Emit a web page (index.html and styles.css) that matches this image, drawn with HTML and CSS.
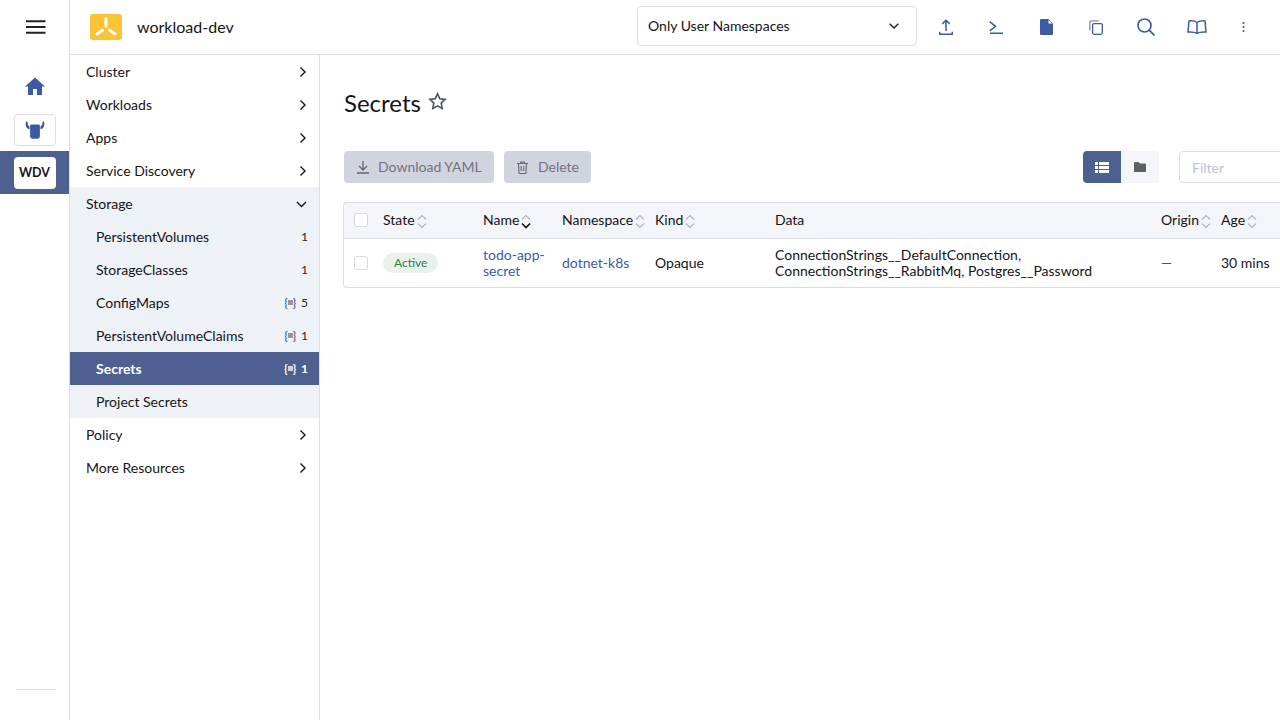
FILE: index.html
```html
<!DOCTYPE html>
<html lang="en">
<head>
<meta charset="utf-8">
<title>Secrets</title>
<link rel="stylesheet" href="styles.css">
</head>
<body>
<div class="app">
  <aside class="rail">
    <div class="rail-top">
      <svg class="burger" width="20" height="14" viewBox="0 0 20 14"><path d="M0 1.200h19.500M0 7h19.500M0 12.800h19.500" stroke="#222" stroke-width="2" fill="none"/></svg>
    </div>
    <div class="rail-home">
      <svg width="20" height="18" viewBox="0 0 20 18"><path fill="#3d5aa5" d="M10 .5 0 9.500h3V18h5v-6h4v6h5V9.500h3z"/></svg>
    </div>
    <div class="rail-box-wrap">
      <div class="rail-box">
        <svg width="20" height="18" viewBox="0 0 20 18"><path fill="#3d5aa5" d="M6.500 3.500h7c.8 0 1.400.4 1.400 1.200v10.300c0 1.700-1 2.700-2.400 2.700h-5c-1.400 0-2.400-1-2.400-2.700V4.700c0-.8.600-1.200 1.400-1.200zM1 .5C0 4 1 7.800 4.500 8.200V5C3 5 2.500 3.200 2.500.5zM19 .5c1 3.500 0 7.300-3.500 7.700V5c1.500 0 2-1.800 2-4.500z"/></svg>
      </div>
    </div>
    <div class="rail-active">
      <div class="rail-chip">WDV</div>
    </div>
    <div class="rail-spacer"></div>
    <div class="rail-rule"></div>
  </aside>

  <div class="shell">
    <header class="topbar">
      <div class="cluster">
        <svg class="logo" width="32" height="26" viewBox="0 0 32 26"><rect width="32" height="26" rx="3" fill="#f9c536"/><path d="M16 4.500V12M12.500 16.300 7 20M19.500 16.300 25 20" stroke="#fff" stroke-width="3" stroke-linecap="round" fill="none"/></svg>
        <span class="cluster-name">workload-dev</span>
      </div>
      <div class="ns-select">
        <span class="ns-label">Only User Namespaces</span>
        <svg width="10" height="6" viewBox="0 0 10 6"><path d="M.7.7 5 5l4.300-4.300" stroke="#222" stroke-width="1.400" fill="none"/></svg>
      </div>
      <div class="tools">
        <span class="tool"><svg width="14" height="16" viewBox="0 0 14 16"><path d="M7 12V1.200M3.300 4.900 7 1.200l3.700 3.700M.7 12.800v2.400h12.600v-2.400" stroke="#3d5aa5" stroke-width="1.500" fill="none"/></svg></span>
        <span class="tool"><svg width="14" height="13" viewBox="0 0 14 13"><path d="M.8.6 6.500 5.300.8 9.800M1 12.200h13" stroke="#3d5aa5" stroke-width="1.500" fill="none"/></svg></span>
        <span class="tool"><svg width="13" height="16" viewBox="0 0 13 16"><path fill="#3d5aa5" d="M1 0h7.500L13 4.500V15a1 1 0 0 1-1 1H1a1 1 0 0 1-1-1V1a1 1 0 0 1 1-1z"/><path fill="#fff" d="M8.500 .7 12.300 4.500H8.500z"/></svg></span>
        <span class="tool"><svg width="14" height="15" viewBox="0 0 14 15"><rect x="3.600" y="3.600" width="9.700" height="10.700" rx="1.500" fill="none" stroke="#3d5aa5" stroke-width="1.300"/><path d="M.8 10.500V2.300C.8 1.300 1.300.8 2.300.8h7.500" fill="none" stroke="#7f90c0" stroke-width="1.300"/></svg></span>
        <span class="tool"><svg width="18" height="18" viewBox="0 0 18 18"><circle cx="7.500" cy="7.500" r="6.500" fill="none" stroke="#3d5aa5" stroke-width="1.700"/><path d="m12.200 12.200 5.300 5.300" stroke="#3d5aa5" stroke-width="1.700"/></svg></span>
        <span class="tool tool-book"><svg width="20" height="14" viewBox="0 0 20 14"><path d="M10 2.500C8.500 1.200 5.500.7 2 .9L1 12c3.500-.2 7 .1 9 1.500 2-1.400 5.500-1.700 9-1.500L18 .9c-3.500-.2-6.500.3-8 1.600zM10 2.500v11" fill="none" stroke="#3d5aa5" stroke-width="1.500"/></svg></span>
        <span class="tool tool-more"><svg width="3" height="10" viewBox="0 0 3 10"><path d="M1.500 0v2M1.500 4v2M1.500 8v2" stroke="#4f68ad" stroke-width="1.800"/></svg></span>
      </div>
    </header>

    <div class="body">
      <nav class="side">
        <a class="nav-item"><span>Cluster</span><svg class="chev" width="7" height="12" viewBox="0 0 7 12"><path d="m1.500 1.500 4.500 4.500-4.500 4.500"/></svg></a>
        <a class="nav-item"><span>Workloads</span><svg class="chev" width="7" height="12" viewBox="0 0 7 12"><path d="m1.500 1.500 4.500 4.500-4.500 4.500"/></svg></a>
        <a class="nav-item"><span>Apps</span><svg class="chev" width="7" height="12" viewBox="0 0 7 12"><path d="m1.500 1.500 4.500 4.500-4.500 4.500"/></svg></a>
        <a class="nav-item"><span>Service Discovery</span><svg class="chev" width="7" height="12" viewBox="0 0 7 12"><path d="m1.500 1.500 4.500 4.500-4.500 4.500"/></svg></a>
        <div class="nav-group">
          <a class="nav-item"><span>Storage</span><svg class="chev chev-down" width="11" height="7" viewBox="0 0 11 7"><path d="m1 1 4.500 4.500L10 1"/></svg></a>
          <a class="nav-sub"><span>PersistentVolumes</span><span class="count">1</span></a>
          <a class="nav-sub"><span>StorageClasses</span><span class="count">1</span></a>
          <a class="nav-sub"><span>ConfigMaps</span><span class="count"><span class="ns-mark">{<i></i>}</span>5</span></a>
          <a class="nav-sub"><span>PersistentVolumeClaims</span><span class="count"><span class="ns-mark">{<i></i>}</span>1</span></a>
          <a class="nav-sub active"><span>Secrets</span><span class="count"><span class="ns-mark">{<i></i>}</span>1</span></a>
          <a class="nav-sub"><span>Project Secrets</span></a>
        </div>
        <a class="nav-item"><span>Policy</span><svg class="chev" width="7" height="12" viewBox="0 0 7 12"><path d="m1.500 1.500 4.500 4.500-4.500 4.500"/></svg></a>
        <a class="nav-item"><span>More Resources</span><svg class="chev" width="7" height="12" viewBox="0 0 7 12"><path d="m1.500 1.500 4.500 4.500-4.500 4.500"/></svg></a>
      </nav>

      <main class="main">
        <div class="title-row">
          <h1>Secrets</h1>
          <svg class="star" width="19" height="18" viewBox="0 0 19 18"><path d="m9.500 1.800 2.300 4.900 5.300.7-3.900 3.700 1 5.300-4.700-2.600-4.700 2.600 1-5.300L1.900 7.400l5.300-.7z" fill="none" stroke="#4d5160" stroke-width="1.600"/></svg>
        </div>
        <div class="actions">
          <button class="btn btn-dl"><svg width="12" height="13" viewBox="0 0 12 13"><path d="M6 0v8.500M2 5l4 4 4-4M0 12h12" fill="none" stroke="#63666f" stroke-width="1.300"/></svg><span class="btn-label">Download YAML</span></button>
          <button class="btn btn-del"><svg width="11" height="13" viewBox="0 0 11 13"><path d="M0 2.500h11M3.500 2.500V1h4v1.500M1.500 2.500l.5 9.500c0 .4.300.5.500.5h6c.2 0 .5-.1.500-.5l.5-9.500M4.200 5v5M6.800 5v5" fill="none" stroke="#63666f" stroke-width="1.100"/></svg><span class="btn-label">Delete</span></button>
          <div class="actions-fill"></div>
          <div class="toggle">
            <span class="toggle-on"><svg width="14" height="11" viewBox="0 0 14 11"><path fill="#fff" d="M0 0h3v3H0zM4 0h10v3H4zM0 4h3v3H0zM4 4h10v3H4zM0 8h3v3H0zM4 8h10v3H4z"/></svg></span>
            <span class="toggle-off"><svg width="12" height="10" viewBox="0 0 12 10"><path fill="#5e6066" d="M0 1c0-.6.400-1 1-1h3.500L6 1.500h5c.6 0 1 .4 1 1V9c0 .6-.4 1-1 1H1c-.6 0-1-.4-1-1z"/></svg></span>
          </div>
          <div class="filter">Filter</div>
        </div>

        <table class="grid">
          <colgroup>
            <col class="c-check"><col class="c-state"><col class="c-name"><col class="c-ns"><col class="c-kind"><col class="c-data"><col class="c-origin"><col class="c-age">
          </colgroup>
          <thead>
            <tr>
              <th class="check-cell"><span class="box"></span></th>
              <th>State<svg class="sort" width="10" height="15" viewBox="0 0 10 15"><path d="m1 5.500 4-4 4 4M1 9.500l4 4 4-4"/></svg></th>
              <th>Name<svg class="sort sort-on" width="10" height="15" viewBox="0 0 10 15"><path d="m1 5.500 4-4 4 4"/><path class="down" d="m1 9.500 4 4 4-4"/></svg></th>
              <th>Namespace<svg class="sort" width="10" height="15" viewBox="0 0 10 15"><path d="m1 5.500 4-4 4 4M1 9.500l4 4 4-4"/></svg></th>
              <th>Kind<svg class="sort" width="10" height="15" viewBox="0 0 10 15"><path d="m1 5.500 4-4 4 4M1 9.500l4 4 4-4"/></svg></th>
              <th>Data</th>
              <th>Origin<svg class="sort" width="10" height="15" viewBox="0 0 10 15"><path d="m1 5.500 4-4 4 4M1 9.500l4 4 4-4"/></svg></th>
              <th>Age<svg class="sort" width="10" height="15" viewBox="0 0 10 15"><path d="m1 5.500 4-4 4 4M1 9.500l4 4 4-4"/></svg></th>
            </tr>
          </thead>
          <tbody>
            <tr>
              <td class="check-cell"><span class="box"></span></td>
              <td><span class="badge">Active</span></td>
              <td class="name-cell"><a class="link">todo-app-secret</a></td>
              <td><a class="link">dotnet-k8s</a></td>
              <td>Opaque</td>
              <td>ConnectionStrings__DefaultConnection, ConnectionStrings__RabbitMq, Postgres__Password</td>
              <td class="muted">—</td>
              <td>30 mins</td>
            </tr>
          </tbody>
        </table>
      </main>
    </div>
  </div>
</div>
</body>
</html>
```
FILE: styles.css
```css
* { box-sizing: border-box; }
html, body { margin: 0; height: 100%; overflow: hidden; }
body { font-family: Lato, "Liberation Sans", sans-serif; font-size: 14px; color: #141419; background: #fff; }
.app { display: flex; width: 1280px; height: 720px; overflow: hidden; }

.rail { width: 70px; flex: none; display: flex; flex-direction: column; border-right: 1px solid #dcdee7; }
.rail-top { height: 55px; display: flex; align-items: center; justify-content: center; padding-left: 2px; padding-bottom: 1px; }
.rail-home { height: 59px; display: flex; align-items: center; justify-content: center; padding-top: 3px; padding-bottom: 1px; padding-left: 1px; }
.rail-box-wrap { height: 37px; display: flex; justify-content: center; }
.rail-box { width: 42px; height: 32px; border: 1px solid #dcdee7; border-radius: 4px; display: flex; align-items: center; justify-content: center; }
.rail-active { height: 43px; background: #4e6090; display: flex; align-items: center; justify-content: center; }
.rail-chip { width: 42px; height: 32px; background: #fff; border-radius: 4px; display: flex; align-items: center; justify-content: center; font-weight: 700; font-size: 12.500px; color: #141419; }
.rail-spacer { flex: 1; }
.rail-rule { height: 1px; margin: 0 13px 30px 16px; background: #dcdee7; }

.shell { flex: 1; min-width: 0; display: flex; flex-direction: column; }
.topbar { height: 55px; flex: none; display: flex; align-items: center; border-bottom: 1px solid #dcdee7; }
.cluster { flex: 1; display: flex; align-items: center; padding-left: 20px; }
.logo { margin-right: 15px; }
.cluster-name { font-size: 16px; position: relative; top: -1px; }
.ns-select { width: 280px; height: 40px; margin-top: -2px; border: 1px solid #dcdee7; border-radius: 4px; display: flex; align-items: center; justify-content: space-between; padding: 0 17px 0 10px; }
.ns-label { position: relative; top: -1px; }
.tools { display: flex; align-items: center; padding-left: 4px; padding-right: 13px; }
.tool { width: 50px; height: 32px; display: flex; align-items: center; justify-content: center; }
.tool-book { padding-left: 1px; }
.tool-more { width: 44px; margin-right: 2px; }

.body { flex: 1; display: flex; min-height: 0; }
.side { width: 250px; flex: none; border-right: 1px solid #dcdee7; }
.nav-item, .nav-sub { height: 33px; display: flex; align-items: center; justify-content: space-between; }
.nav-item { padding: 0 13px 0 16px; }
.nav-sub { padding: 0 11px 0 26px; }
.chev { fill: none; stroke: #141419; stroke-width: 1.400; margin-top: 1px; }
.chev-down { margin-right: -1px; }
.nav-group { background: #eef1f6; }
.nav-sub.active { background: #4e6090; color: #fff; font-weight: 700; }
.count { font-size: 12px; display: flex; align-items: center; }
.nav-sub .count { color: #26272c; }
.nav-sub.active .count { color: #fff; }
.ns-mark { font-size: 11px; display: flex; align-items: center; margin-right: 5px; color: #3b2a5a; }
.nav-sub.active .ns-mark { color: #fff; }
.ns-mark i { width: 5px; height: 5px; background: #93969f; margin: 0; }
.nav-sub.active .ns-mark i { background: #cfd3e0; }

.main { flex: 1; min-width: 0; padding-left: 24px; overflow: hidden; }
.title-row { height: 96px; display: flex; align-items: center; }
h1 { margin: 0; font-size: 24px; font-weight: 400; line-height: 30px; }
.star { margin-left: 7px; margin-top: -4px; }
.actions { display: flex; height: 32px; width: 960px; }
.btn { height: 32px; border: 0; border-radius: 4px; background: #d1d3de; color: #71747f; font: inherit; display: flex; align-items: center; padding: 0; }
.btn-label { position: relative; top: -1px; }
.btn-dl { width: 150px; padding-left: 13px; gap: 9px; margin-right: 10px; }
.btn-del { width: 87px; padding-left: 13px; gap: 10px; }
.actions-fill { flex: 1; }
.toggle { display: flex; width: 76px; height: 32px; margin-right: 20px; }
.toggle-on, .toggle-off { flex: 1; display: flex; align-items: center; justify-content: center; }
.toggle-on { background: #4e6090; border-radius: 4px 0 0 4px; }
.toggle-off { background: #f3f5f9; border-radius: 0 4px 4px 0; }
.filter { width: 125px; height: 32px; border: 1px solid #dcdee7; border-radius: 4px; padding-left: 12px; line-height: 32px; color: #bfc3d4; flex: none; }

.grid { margin: 19px 0 0 -1px; width: 950px; table-layout: fixed; border-collapse: separate; border-spacing: 0; }
.c-check { width: 30px; } .c-state { width: 100px; } .c-name { width: 79px; } .c-ns { width: 93px; } .c-kind { width: 120px; } .c-data { width: 386px; } .c-origin { width: 60px; } .c-age { width: 82px; }
th, td { padding: 0 10px; text-align: left; font-weight: 400; line-height: 16px; }
th { height: 37px; padding-bottom: 2px; background: #f3f5f9; border-top: 1px solid #dcdee7; border-bottom: 1px solid #dcdee7; white-space: nowrap; }
td { height: 49px; border-bottom: 1px solid #dcdee7; }
th:first-child, td:first-child { border-left: 1px solid #dcdee7; }
th:first-child { border-top-left-radius: 4px; }
td:first-child { border-bottom-left-radius: 4px; }
.check-cell { padding: 0 0 0 10px; }
th.check-cell { padding-bottom: 2px; }
.name-cell { padding-right: 0; }
.muted { color: #55565e; }
.box { display: block; width: 14px; height: 14px; border: 1px solid #d5d7e2; border-radius: 3px; background: #fff; }
.sort { vertical-align: baseline; margin: -4px 0 -4px 2px; fill: none; stroke: #b4b6c2; stroke-width: 1.200; }
.sort .down { stroke: #141419; stroke-width: 1.600; }
.badge { display: inline-block; height: 20px; line-height: 20px; padding: 0 11px; border-radius: 10px; background: #e9f2ea; color: #2f7d4f; font-size: 12px; }
.link { color: #3d5aa5; }
```
